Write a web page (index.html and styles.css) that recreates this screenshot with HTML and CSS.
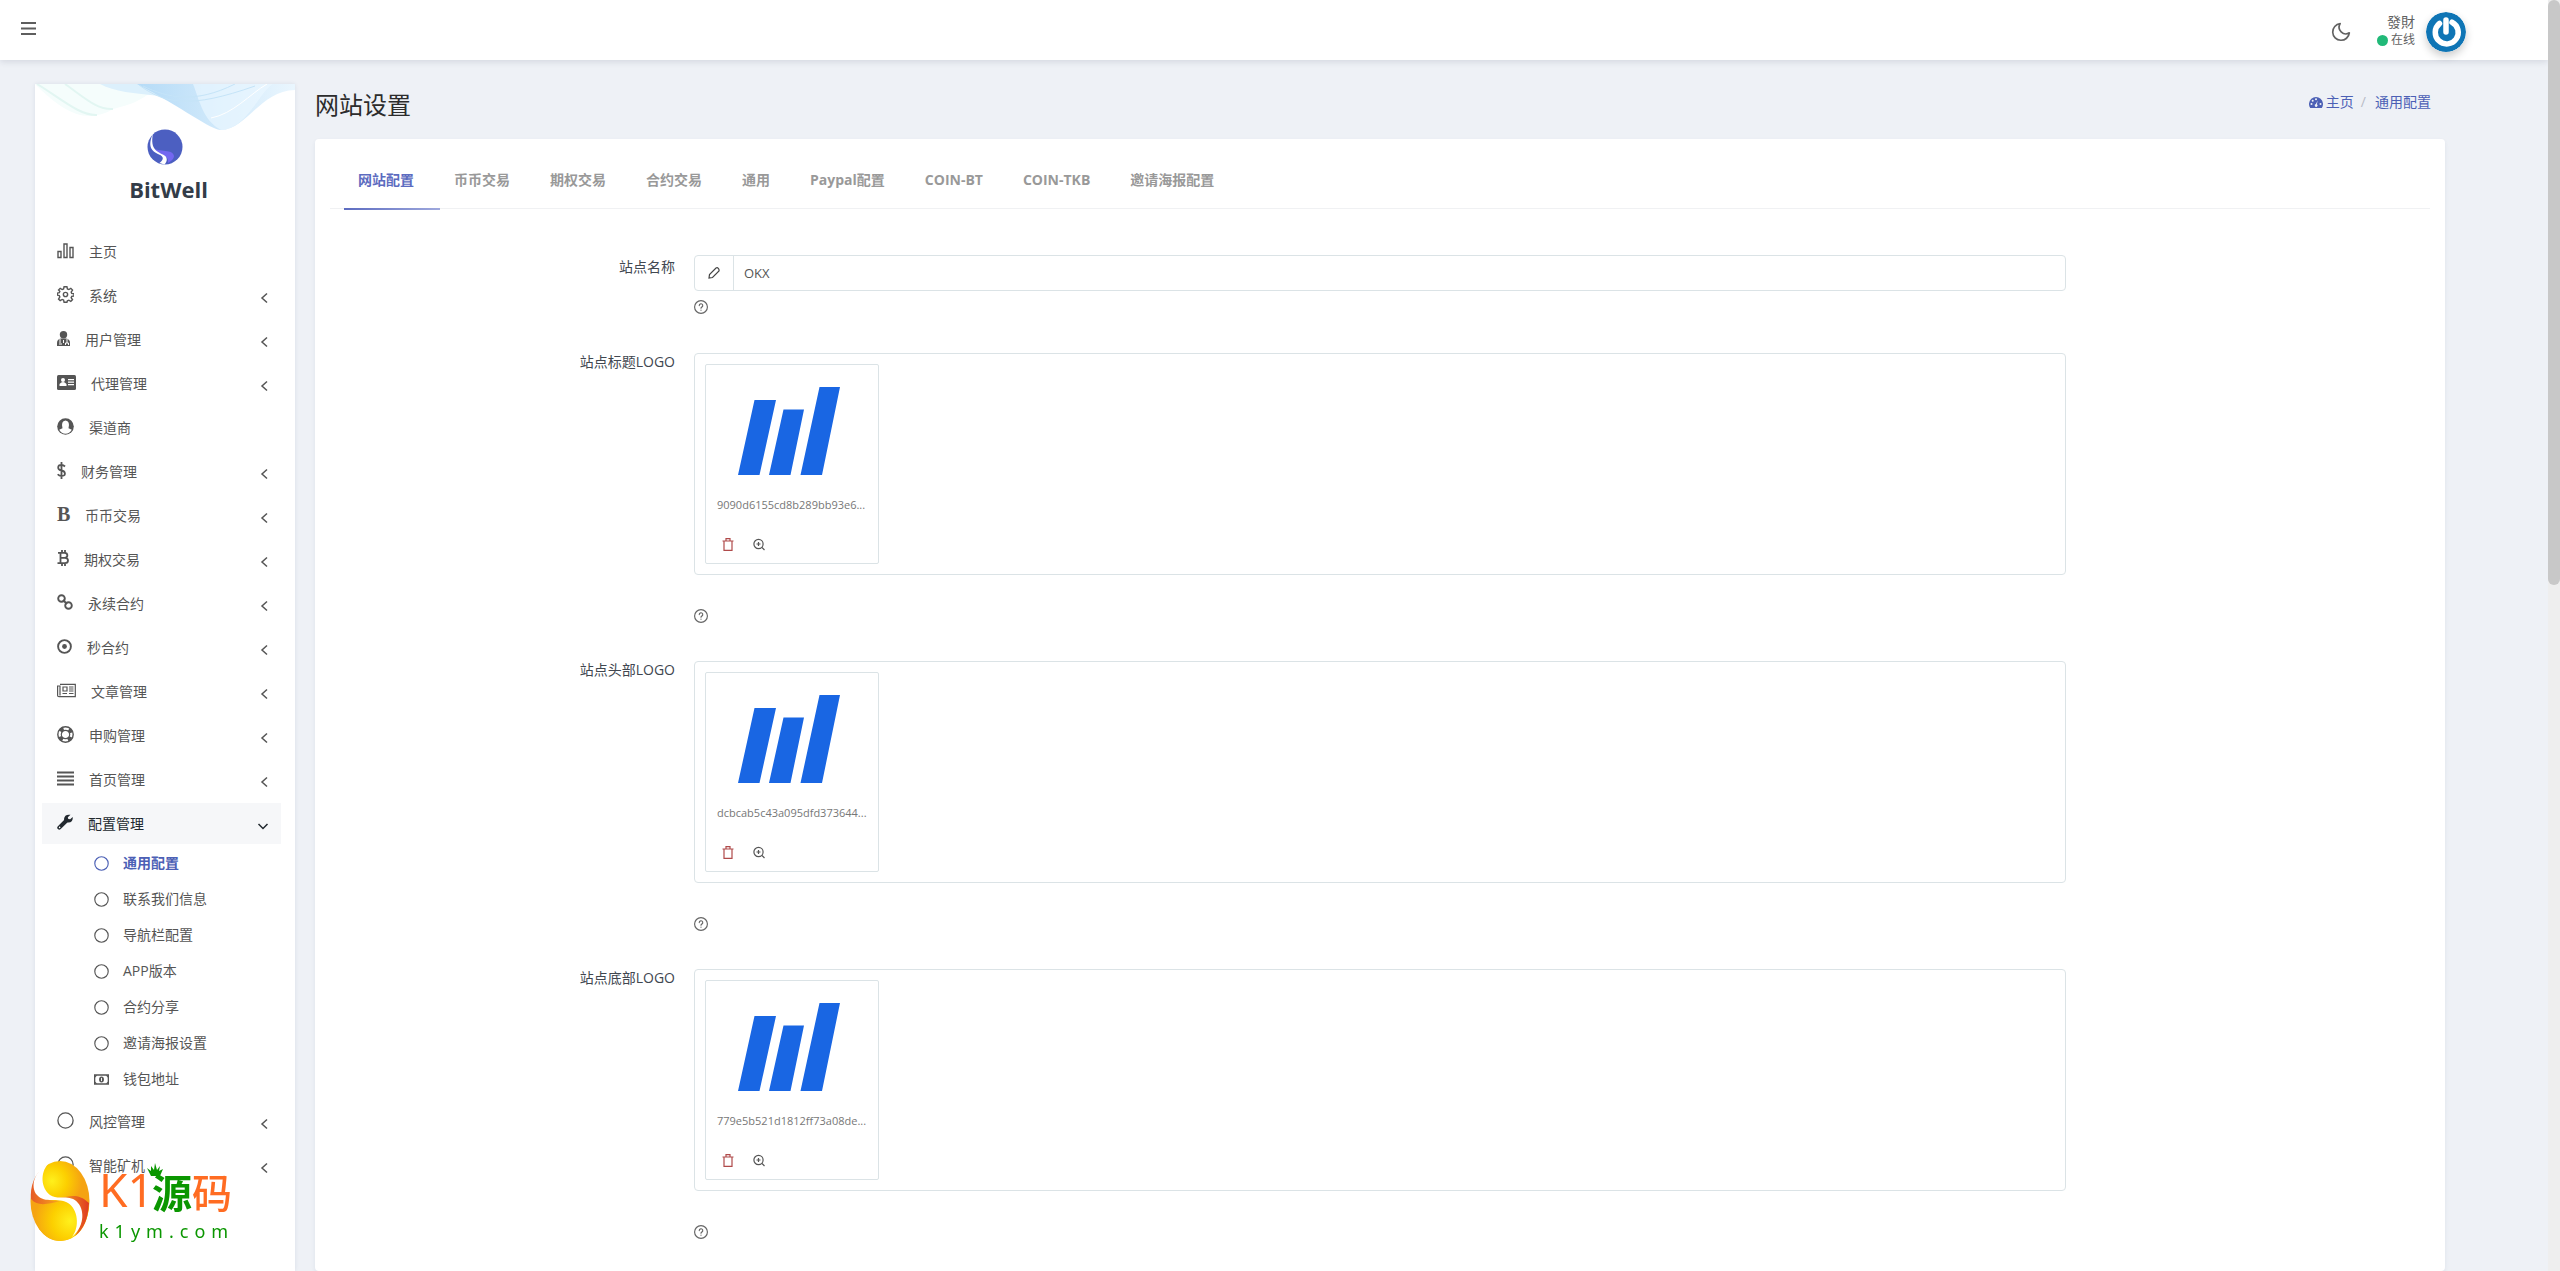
FILE: index.html
```html
<!DOCTYPE html>
<html lang="zh-CN">
<head>
<meta charset="utf-8">
<title>网站设置</title>
<link rel="stylesheet" href="styles.css">
</head>
<body>
<svg class="defs" aria-hidden="true">
  <symbol id="i-left" viewBox="0 0 10 12"><path d="M8 1.500 3 6l5 4.500" fill="none" stroke="currentColor" stroke-width="1.500"/></symbol>
  <symbol id="i-down" viewBox="0 0 12 12"><path d="M1.500 4 6 8.500 10.500 4" fill="none" stroke="currentColor" stroke-width="1.500"/></symbol>
  <symbol id="i-circle" viewBox="0 0 17 17"><circle cx="8.500" cy="8.500" r="7.600" fill="none" stroke="currentColor" stroke-width="1.300"/></symbol>
  <symbol id="i-help" viewBox="0 0 24 24"><g fill="none" stroke="currentColor" stroke-width="2" stroke-linecap="round"><circle cx="12" cy="12" r="11"/><path d="M9 9.500a3 3 0 1 1 4.300 2.700c-.9.500-1.300 1-1.300 2M12 17.300v.2"/></g></symbol>
  <symbol id="i-trash" viewBox="0 0 12 13"><path d="M.5 3h11M4 2.500V.700h4v1.800M2 3v9.400h8V3" fill="none" stroke="currentColor" stroke-width="1.200"/></symbol>
  <symbol id="i-zoom" viewBox="0 0 12 12"><g fill="none" stroke="currentColor" stroke-width="1.200"><circle cx="5.500" cy="5.500" r="4.600"/><path d="M9 9l2.500 2.500M3.500 5.500h4M5.500 3.500v4"/></g></symbol>
  <symbol id="i-logo" viewBox="0 0 102 88"><path fill="#1966e3" d="M16.500 13H38L21.500 88H0zM45.500 22.500H66L52.500 88H31zM81.500 0H102L84 88H62.500z"/></symbol>
</svg>

<header class="topbar">
  <button class="icon-btn" type="button" aria-label="菜单"><svg width="15" height="13" viewBox="0 0 15 13"><path d="M0 1h15M0 6.500h15M0 12h15" stroke="#5e5e5e" stroke-width="2"/></svg></button>
  <div class="topbar-right">
    <button class="icon-btn" type="button" aria-label="夜间模式"><svg width="20" height="20" viewBox="0 0 24 24" fill="none" stroke="#626262" stroke-width="2" stroke-linejoin="round"><path d="M22 13A10 10 0 1 1 11 2a8 8 0 0 0 11 11z"/></svg></button>
    <div class="user">
      <span class="user-name">發財</span>
      <span class="user-state"><i class="dot"></i>在线</span>
    </div>
    <svg class="avatar" viewBox="0 0 40 40"><circle cx="20" cy="20" r="20" fill="#0f75b5"/><path d="M13.500 11.500A11.500 11.500 0 1 0 26 10.200M20 8v12" fill="none" stroke="#fff" stroke-width="5.500" stroke-linecap="round"/></svg>
  </div>
</header>

<div class="page">
  <aside class="sidebar">
    <div class="brand">
      <svg class="waves" viewBox="0 0 260 46" preserveAspectRatio="none">
        <defs><linearGradient id="wave" x1="0" x2="1"><stop offset="0" stop-color="#b5dbf7"/><stop offset="1" stop-color="#eaf6fe"/></linearGradient></defs>
        <path d="M0 0H125C108 18 90 22 78 25 50 42 26 26 0 0z" fill="#f5fdfc"/>
        <path d="M2 0C25 14 45 32 62 31M30 0C50 14 62 26 78 25" fill="none" stroke="#e2f6f2" stroke-width="2"/>
        <path d="M65 0H205C170 16 145 17 125 12 98 9 80 8 65 0z" fill="#dcf0fc"/>
        <path d="M102 0H260V6C225 7 211 46 186 46 176 46 148 24 102 0z" fill="url(#wave)"/>
        <path d="M158 0C165 18 168 36 186 46 211 46 225 7 238 0z" fill="#e9f6ff" opacity=".7"/>
        <path d="M108 2C133 14 160 20 200 0M104 1C130 20 155 25 220 2" fill="none" stroke="#c5e4f8"/>
        <path d="M176 34C198 30 215 10 232 0" fill="none" stroke="#fff"/>
      </svg>
      <svg class="brand-mark" viewBox="0 0 36 36"><circle cx="18" cy="18" r="17.500" fill="#4c5fc1"/><path d="M4 19C13 23 26 20 27 27c0 3-3 5-6 7 2-10-12-6-17-15z" fill="#7367f0"/><path d="M6 4.500C.500 17 4 22 12 25.500c5 2 5 5 .5 8.500l5 1.500c3-3 3-7 0-9C12 23 2.500 22 6 4.500z" fill="#fff"/></svg>
      <span class="brand-name">BitWell</span>
    </div>
    <nav>
      <ul class="menu">
        <li><a href="#"><svg class="w17" viewBox="0 0 17 16"><path d="M1 9h3v6H1zM7 1.500h3V15H7zM13 5h3v10h-3z" fill="none" stroke="currentColor" stroke-width="1.400"/></svg><span>主页</span></a></li>
        <li><a href="#"><svg class="w17" viewBox="0 0 24 24" fill="none" stroke="currentColor" stroke-width="2"><circle cx="12" cy="12" r="3"/><path d="M10 1h4l.7 3.200 2 .8 2.800-1.700 2.400 2.400L20 8.500l.8 2L24 11v3l-3.200.5-.8 2 1.900 2.900-2.400 2.300-2.800-1.700-2 .8L14 23h-4l-.7-3.200-2-.8-2.800 1.700-2.300-2.300L4 15.500l-.8-2L.5 13v-3l2.700-.5.8-2L2.200 5.600l2.300-2.300L7.300 5l2-.8z"/></svg><span>系统</span><svg class="arrow"><use href="#i-left"/></svg></a></li>
        <li><a href="#"><svg class="w13" viewBox="0 0 13 15" fill="currentColor"><circle cx="6.500" cy="3.800" r="3.700"/><path d="M0 15V12Q0 8 4 7.500h5Q13 8 13 12v3z"/><path d="M3 8v4M10 8v4M2 13h3M8.500 14v-2h3v2M6.500 9v3" stroke="#fff"/></svg><span>用户管理</span><svg class="arrow"><use href="#i-left"/></svg></a></li>
        <li><a href="#"><svg class="w19" viewBox="0 0 19 15"><rect width="19" height="15" rx="1.500" fill="currentColor"/><g fill="#fff"><circle cx="6" cy="5" r="2"/><path d="M2.500 11V9Q6 5 9.500 9v2zM11 4h6v1.200h-6zM11 6.500h6v1.200h-6zM11 9h6v1.200h-6z"/></g></svg><span>代理管理</span><svg class="arrow"><use href="#i-left"/></svg></a></li>
        <li><a href="#"><svg class="w17" viewBox="0 0 17 17"><circle cx="8.500" cy="8.500" r="8.300" fill="currentColor"/><path d="M2.200 11.800 5.500 10.300Q3.700 3 8.500 2.500 13.300 3 11.500 10.300l3.300 1.500Q12.500 15.700 8.500 15.700T2.200 11.800z" fill="#fff"/></svg><span>渠道商</span></a></li>
        <li><a href="#"><svg class="w9" viewBox="0 0 9 17"><path d="M8 4.500Q6.500 3 4.500 3 1.200 3 1.200 5.500T4.500 8.500 7.900 11.500 4.500 14Q2 14 .7 12.300M4.500 0v17" fill="none" stroke="currentColor" stroke-width="1.800"/></svg><span>财务管理</span><svg class="arrow"><use href="#i-left"/></svg></a></li>
        <li><a href="#"><b class="glyph w13">B</b><span>币币交易</span><svg class="arrow"><use href="#i-left"/></svg></a></li>
        <li><a href="#"><svg class="w12" viewBox="0 0 12 16"><path d="M1 2.800h6.500c3.800 0 3.800 5 0 5h-4 4.500c4 0 4 5.400 0 5.400H.5M3.500 3v10M5 0v3M8 0v3M5 13v3M8 13v3" fill="none" stroke="currentColor" stroke-width="1.800"/></svg><span>期权交易</span><svg class="arrow"><use href="#i-left"/></svg></a></li>
        <li><a href="#"><svg class="w16" viewBox="0 0 16 16"><g fill="none" stroke="currentColor" stroke-width="1.900"><circle cx="4.500" cy="4.500" r="3.300"/><circle cx="11.500" cy="11.500" r="3.300"/><path d="M6 6l4 4"/></g></svg><span>永续合约</span><svg class="arrow"><use href="#i-left"/></svg></a></li>
        <li><a href="#"><svg class="w15" viewBox="0 0 15 15"><circle cx="7.500" cy="7.500" r="6.400" fill="none" stroke="currentColor" stroke-width="1.900"/><circle cx="7.500" cy="7.500" r="2.400" fill="currentColor"/></svg><span>秒合约</span><svg class="arrow"><use href="#i-left"/></svg></a></li>
        <li><a href="#"><svg class="w19" viewBox="0 0 19 14" fill="none" stroke="currentColor" stroke-width="1.200"><path d="M3 .8h15.300v12.400H2Q.6 13.200.6 12V2.500H3v9.500M6 3.500h4v4H6zM12 3.500h4.500M12 5.500h4.500M12 7.500h4.500M5.500 10h4.500M12 10h4.500"/></svg><span>文章管理</span><svg class="arrow"><use href="#i-left"/></svg></a></li>
        <li><a href="#"><svg class="w17" viewBox="0 0 17 17" fill="none" stroke="currentColor"><circle cx="8.500" cy="8.500" r="7.700" stroke-width="1.400"/><circle cx="8.500" cy="8.500" r="4.200" stroke-width="1.200"/><circle cx="8.500" cy="8.500" r="6" stroke-width="3.600" stroke-dasharray="4 5.425" stroke-dashoffset="-2.700"/></svg><span>申购管理</span><svg class="arrow"><use href="#i-left"/></svg></a></li>
        <li><a href="#"><svg class="w17" viewBox="0 0 17 14"><path d="M0 1h17M0 5h17M0 9h17M0 13h17" stroke="currentColor" stroke-width="2"/></svg><span>首页管理</span><svg class="arrow"><use href="#i-left"/></svg></a></li>
        <li>
          <a class="open" href="#"><svg class="w16" viewBox="0 0 16 16"><path d="M2.300 13.700 9 7" stroke="currentColor" stroke-width="4" stroke-linecap="round"/><path d="M13.500.8 10.800 3.200l.5 1.700 1.900.4L15.700 3Q16.200 8 11.500 8.500 7 8.500 7 5 7.500 0 13.500.8z" fill="currentColor"/><circle cx="2.600" cy="13.400" r=".8" fill="#fff"/></svg><span>配置管理</span><svg class="arrow"><use href="#i-down"/></svg></a>
          <ul class="submenu">
            <li><a class="current" href="#"><svg class="w15"><use href="#i-circle"/></svg><span>通用配置</span></a></li>
            <li><a href="#"><svg class="w15"><use href="#i-circle"/></svg><span>联系我们信息</span></a></li>
            <li><a href="#"><svg class="w15"><use href="#i-circle"/></svg><span>导航栏配置</span></a></li>
            <li><a href="#"><svg class="w15"><use href="#i-circle"/></svg><span>APP版本</span></a></li>
            <li><a href="#"><svg class="w15"><use href="#i-circle"/></svg><span>合约分享</span></a></li>
            <li><a href="#"><svg class="w15"><use href="#i-circle"/></svg><span>邀请海报设置</span></a></li>
            <li><a href="#"><svg class="w15" viewBox="0 0 16 11"><path d="M.7.700h14.600v9.600H.7z" fill="none" stroke="currentColor" stroke-width="1.400"/><ellipse cx="8" cy="5.500" rx="2.600" ry="3.200" fill="currentColor"/><path d="M8 3.800v3.400" stroke="#fff"/><path d="M1 1h2.500L1 3.500zM15 1h-2.500L15 3.500zM1 10h2.500L1 7.500zM15 10h-2.500L15 7.500z" fill="currentColor"/></svg><span>钱包地址</span></a></li>
          </ul>
        </li>
        <li><a href="#"><svg class="w17"><use href="#i-circle"/></svg><span>风控管理</span><svg class="arrow"><use href="#i-left"/></svg></a></li>
        <li><a href="#"><svg class="w17"><use href="#i-circle"/></svg><span>智能矿机</span><svg class="arrow"><use href="#i-left"/></svg></a></li>
      </ul>
    </nav>
  </aside>

  <main class="content">
    <div class="heading">
      <h1>网站设置</h1>
      <nav class="crumbs">
        <a href="#"><svg width="14" height="11" viewBox="0 0 14 11"><path d="M1.200 11A7 7 0 1 1 12.800 11z" fill="currentColor"/><g fill="#eef1f6"><circle cx="2.500" cy="7" r="1"/><circle cx="3.700" cy="3.700" r="1"/><circle cx="7" cy="2.300" r="1"/><circle cx="11.500" cy="7" r="1"/><path d="M8.700 3.500 7.900 7.300a1.400 1.400 0 1 1-1-.2z"/></g></svg>主页</a><span class="slash">/</span><a href="#">通用配置</a>
      </nav>
    </div>
    <section class="card">
      <nav class="tabs">
        <a class="active" href="#">网站配置</a><a href="#">币币交易</a><a href="#">期权交易</a><a href="#">合约交易</a><a href="#">通用</a><a href="#">Paypal配置</a><a href="#">COIN-BT</a><a href="#">COIN-TKB</a><a href="#">邀请海报配置</a>
      </nav>
      <form class="form">
        <div class="row">
          <label for="site-name">站点名称</label>
          <div class="field">
            <div class="input-group">
              <span class="addon"><svg width="12" height="12" viewBox="0 0 12 12"><path d="M1 11l.5-3.500L8 1q1.300-.7 2.300.3T11 4L4.500 10.500z" fill="none" stroke="#444" stroke-width="1.200"/></svg></span>
              <input id="site-name" type="text" value="OKX">
            </div>
            <svg class="help"><use href="#i-help"/></svg>
          </div>
        </div>
        <div class="row upload">
          <span class="label">站点标题LOGO</span>
          <div class="field">
            <div class="drop"><div class="file"><svg class="thumb"><use href="#i-logo"/></svg><span class="file-name">9090d6155cd8b289bb93e6...</span><div class="file-actions"><button class="del" type="button" aria-label="删除"><svg><use href="#i-trash"/></svg></button><button type="button" aria-label="预览"><svg><use href="#i-zoom"/></svg></button></div></div></div>
            <svg class="help"><use href="#i-help"/></svg>
          </div>
        </div>
        <div class="row upload">
          <span class="label">站点头部LOGO</span>
          <div class="field">
            <div class="drop"><div class="file"><svg class="thumb"><use href="#i-logo"/></svg><span class="file-name">dcbcab5c43a095dfd373644...</span><div class="file-actions"><button class="del" type="button" aria-label="删除"><svg><use href="#i-trash"/></svg></button><button type="button" aria-label="预览"><svg><use href="#i-zoom"/></svg></button></div></div></div>
            <svg class="help"><use href="#i-help"/></svg>
          </div>
        </div>
        <div class="row upload">
          <span class="label">站点底部LOGO</span>
          <div class="field">
            <div class="drop"><div class="file"><svg class="thumb"><use href="#i-logo"/></svg><span class="file-name">779e5b521d1812ff73a08de...</span><div class="file-actions"><button class="del" type="button" aria-label="删除"><svg><use href="#i-trash"/></svg></button><button type="button" aria-label="预览"><svg><use href="#i-zoom"/></svg></button></div></div></div>
            <svg class="help"><use href="#i-help"/></svg>
          </div>
        </div>
      </form>
    </section>
  </main>
</div>

<div class="scrollbar" aria-hidden="true"><div class="scroll-thumb"></div></div>

<div class="watermark">
  <svg class="wm-ball" viewBox="0 0 60 80"><defs><radialGradient id="gold1" gradientUnits="userSpaceOnUse" cx="22" cy="20" r="30"><stop offset="0" stop-color="#fff01c"/><stop offset=".5" stop-color="#fccf00"/><stop offset="1" stop-color="#f5a312"/></radialGradient><radialGradient id="gold3" gradientUnits="userSpaceOnUse" cx="40" cy="60" r="36"><stop offset="0" stop-color="#fff01c"/><stop offset=".5" stop-color="#fccf00"/><stop offset="1" stop-color="#f5a312"/></radialGradient><linearGradient id="gold2" x1="0" x2="1"><stop offset="0" stop-color="#e65a26"/><stop offset="1" stop-color="#f7a71b"/></linearGradient><linearGradient id="gold4" x1="0" x2="1"><stop offset="0" stop-color="#f7b01b"/><stop offset="1" stop-color="#df3a22"/></linearGradient></defs><ellipse cx="30" cy="40" rx="29.500" ry="40" fill="url(#gold1)"/><path d="M1 36C10 44 20 40 30 39 45 42 52 42 59 44 58 66 46 80 30 80S2 64 1 36z" fill="url(#gold3)"/><path d="M17 4C4 12 0 26 1 38 8 46 18 43 30 40 16 40 6 36 7 26 7 16 12 9 17 4z" fill="url(#gold2)"/><path d="M26 37C38 37 46 30 59 42 58 58 54 68 45 75 53 62 54 52 48 43 42 36 34 37 26 37z" fill="url(#gold4)"/><path d="M18 3C4 10 0 26 7 34 15 43 28 36 38 42 48 48 50 66 42 76 54 66 55 50 48 42 40 32 28 40 20 34 11 27 10 12 18 3z" fill="#fff"/></svg>
  <div class="wm-text">
    <div class="wm-title"><span class="wm-k">K1</span><span class="wm-yuan">源<svg class="wm-crown" viewBox="0 0 16 14"><path d="M0 5l4 3 0-5 3 4L8 0l2 7 3-4-1 5 4-2-3 7H4z" fill="#0a9600"/></svg></span><span>码</span></div>
    <div class="wm-url">k1ym.com</div>
  </div>
</div>
</body>
</html>
```
FILE: styles.css
```css
* { box-sizing: border-box; }
body { margin: 0; padding-right: 12px; background: #eef1f6; color: #414750; font: 14px/20px "Open Sans", "Noto Sans CJK SC", sans-serif; }
a { color: inherit; text-decoration: none; }
ul { list-style: none; margin: 0; padding: 0; }
button { border: 0; background: none; padding: 0; font: inherit; cursor: pointer; }
svg { display: block; flex: none; }
.defs { position: absolute; width: 0; height: 0; }

.topbar { display: flex; justify-content: space-between; align-items: center; height: 60px; padding: 0 82px 0 21px; background: #fff; box-shadow: 0 2px 6px rgba(30, 40, 70, .12); }
.topbar > .icon-btn { margin-bottom: 4px; }
.topbar-right { display: flex; align-items: center; gap: 11px; padding-top: 4px; }
.user { display: flex; flex-direction: column; align-items: flex-end; margin-left: 15px; padding-bottom: 2px; color: #626262; line-height: 18px; }
.user-state { display: flex; align-items: center; gap: 3px; font-size: 12px; }
.dot { width: 11px; height: 11px; border-radius: 50%; background: #21b978; }
.avatar { width: 40px; height: 40px; border-radius: 50%; box-shadow: 0 4px 8px rgba(0, 0, 0, .2); }

.page { display: flex; gap: 20px; min-height: calc(100vh - 60px); padding: 24px 103px 0 35px; }
.sidebar { flex: none; width: 260px; background: #fff; box-shadow: 0 0 4px rgba(40, 60, 100, .1); }
.brand { position: relative; display: flex; flex-direction: column; align-items: center; gap: 10px; height: 147px; padding-top: 45px; }
.waves { position: absolute; top: 0; left: 0; width: 100%; height: 46px; }
.brand-mark { position: relative; width: 36px; height: 36px; }
.brand-name { padding-left: 7px; color: #333c48; font-size: 22px; font-weight: 700; line-height: 28px; }

.menu { padding: 0 14px 0 7px; }
.menu > li { padding-bottom: 3px; }
.menu a { display: flex; align-items: center; gap: 15px; height: 41px; padding: 0 12px 0 15px; color: #555; }
.menu > li > a > svg:first-child { margin-bottom: 3px; }
.menu .open { background: #f6f7f9; color: #22292f; }
.arrow { width: 10px; height: 12px; margin: 5px 0 0 auto; }
.submenu { padding: 1px 0; }
.submenu a { height: 36px; gap: 14px; padding-left: 52px; }
.submenu .current { color: #4c60b5; font-weight: 700; }
.w9 { width: 9px; height: 17px; }
.w12 { width: 12px; height: 16px; }
.w13 { width: 13px; height: 15px; }
.w15 { width: 15px; height: 15px; }
.w16 { width: 16px; height: 16px; }
.w17 { width: 17px; height: 17px; }
.w19 { width: 19px; height: 15px; }
.open .arrow { width: 12px; }
.glyph { height: 18px; font: 700 20px/15px "Liberation Serif", serif; }

.content { display: flex; flex: 1; flex-direction: column; min-width: 0; }
.heading { display: flex; justify-content: space-between; height: 55px; }
h1 { margin: 5px 0 0; color: #2c2c2c; font-size: 24px; font-weight: 400; line-height: 32px; }
.crumbs { display: flex; height: 20px; margin: 8px 14px 0 0; color: #4c60b5; }
.crumbs a { display: flex; align-items: center; gap: 3px; }
.slash { padding: 0 9px 0 7px; color: #b8bcc6; }

.card { flex: 1; padding: 15px; border-radius: 4px; background: #fff; box-shadow: 0 2px 4px rgba(40, 60, 100, .08); }
.tabs { display: flex; gap: 12px; height: 55px; padding-left: 14px; border-bottom: 1px solid #f0f1f3; color: #999; font-weight: 700; }
.tabs a { height: 56px; padding: 16px 14px 0; }
.tabs .active { margin-right: -12px; padding-right: 26px; border-bottom: 2px solid; border-image: linear-gradient(90deg, #5c6bc0, #9fa9dd) 1; color: #5c6bc0; }

.form { padding-top: 46px; }
.row { display: grid; grid-template-columns: 2fr 8fr 2fr; min-height: 98px; }
.row.upload { min-height: 308px; }
.row:last-child { min-height: 0; }
label, .label { padding-right: 5px; color: #414750; text-align: right; }
label { padding-top: 2px; }
.label { line-height: 18px; }
.field { padding: 0 14px; }
.input-group { display: flex; height: 36px; border: 1px solid #dbe3e6; border-radius: 4px; }
.addon { display: flex; align-items: center; justify-content: center; width: 39px; border-right: 1px solid #dbe3e6; }
input { flex: 1; min-width: 0; padding: 0 10px; border: 0; outline: 0; background: none; color: #555; font: 13px "Open Sans", "Noto Sans CJK SC", sans-serif; }
.help { width: 14px; height: 14px; margin-top: 9px; color: #666; }
.drop { height: 222px; padding: 10px; border: 1px solid #dbe3e6; border-radius: 4px; }
.upload .help { margin-top: 34px; }
.file { width: 174px; height: 200px; padding: 22px 0 0 11px; border: 1px solid #dbe3e6; border-radius: 2px; }
.thumb { width: 102px; height: 88px; margin-left: 21px; }
.file-name { display: block; margin-top: 20px; color: #777; font-size: 11px; white-space: nowrap; }
.file-actions { display: flex; gap: 19px; margin: 23px 0 0 5px; }
.file-actions svg { width: 12px; height: 13px; color: #555; }
.file-actions .del svg { color: #b04a4a; }

.scrollbar { position: fixed; top: 0; right: 0; bottom: 0; width: 12px; background: #eeeeee; }
.scroll-thumb { height: 46%; border-radius: 6px; background: #c8c8c8; }

.watermark { position: fixed; bottom: 30px; left: 30px; display: flex; gap: 9px; }
.wm-ball { width: 60px; height: 80px; }
.wm-title { display: flex; color: #ff6c22; font: 500 40px/60px "Noto Sans CJK SC", sans-serif; }
.wm-k { width: 53px; font: 46px/56px "Noto Sans", sans-serif; }
.wm-yuan { position: relative; color: #0a9600; font-weight: 700; }
.wm-crown { position: absolute; top: 2px; left: -5px; width: 16px; height: 14px; }
.wm-url { color: #0a9600; font: 18px/20px "Noto Sans", sans-serif; letter-spacing: 6px; }
```
